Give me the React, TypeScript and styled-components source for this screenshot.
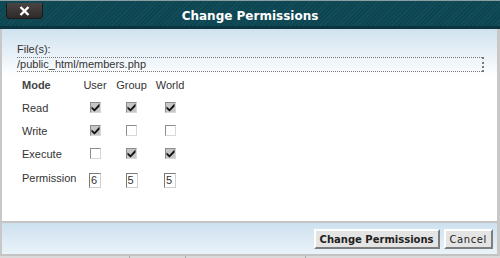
import styled, { createGlobalStyle } from "styled-components";

const GlobalStyle = createGlobalStyle`
  html, body {
    margin: 0;
    padding: 0;
    background: #d6d6d6;
  }
`;

const Dialog = styled.div`
  width: 500px;
  height: 258px;
  display: flex;
  flex-direction: column;
  overflow: hidden;
  font-family: "Liberation Sans", Arial, sans-serif;
  font-size: 11px;
  color: #333;
`;

const TitleBar = styled.div`
  position: relative;
  height: 25px;
  border-top: 1px solid #8a9ea3;
  border-bottom: 3px solid #0a3540;
  background-color: #0c4652;
  background-image: repeating-linear-gradient(
    135deg,
    rgba(255, 255, 255, 0.04) 0px,
    rgba(255, 255, 255, 0.04) 1px,
    transparent 1px,
    transparent 3px
  );
  display: flex;
  align-items: center;
  justify-content: center;
`;

const Title = styled.div`
  font-family: "DejaVu Sans", Verdana, sans-serif;
  font-weight: bold;
  font-size: 12px;
  color: #fff;
  margin-top: 5px;
`;

const CloseButton = styled.div`
  position: absolute;
  left: 6px;
  top: 2px;
  width: 35px;
  height: 15px;
  background: linear-gradient(#4a4544, #2e2a29);
  border: 1px solid #1d1b1a;
  border-top: none;
  border-radius: 0 0 4px 4px;
  display: flex;
  align-items: center;
  justify-content: center;
`;

const Body = styled.div`
  flex: 1;
  border-left: 2px solid #c8c8c8;
  border-right: 3px solid #c8c8c8;
  background: linear-gradient(#cfe2ef 0px, #ffffff 48px);
  padding: 13px 13px 0 15px;
`;

const FieldLabel = styled.div`
  line-height: 14px;
`;

const PathBox = styled.div`
  width: 465px;
  height: 13px;
  border-top: 1px dotted #777;
  border-bottom: 1px dotted #777;
  border-right: 2px dotted #777;
  line-height: 13px;
  margin-top: 1px;
`;

const Grid = styled.div`
  display: grid;
  grid-template-columns: 56px 34px 39px 38px;
  grid-template-rows: 23px 23px 23px 23px 26px;
  margin: 1px 0 0 5px;
  align-items: center;
`;

const Cell = styled.div<{ $head?: boolean; $center?: boolean }>`
  font-weight: ${(p) => (p.$head ? "bold" : "normal")};
  color: ${(p) => (p.$head ? "#444" : "#333")};
  display: flex;
  justify-content: ${(p) => (p.$center ? "center" : "flex-start")};
`;

const Box = styled.span<{ $on?: boolean }>`
  width: 11px;
  height: 11px;
  box-sizing: border-box;
  border: 1px solid;
  border-color: #8c8c8c #d8d8d8 #d8d8d8 #8c8c8c;
  background: ${(p) => (p.$on ? "#c6c6c6" : "#fff")};
  display: inline-flex;
  align-items: center;
  justify-content: center;
`;

const PermInput = styled.span`
  width: 12px;
  height: 15px;
  box-sizing: border-box;
  border: 1px solid;
  border-color: #7a7a7a #d0d0d0 #d0d0d0 #7a7a7a;
  background: #fff;
  font-size: 11px;
  line-height: 13px;
  padding-left: 1px;
  margin-top: 4px;
`;

const Footer = styled.div`
  height: 31px;
  border-top: 2px solid #c4c4c4;
  border-left: 2px solid #c8c8c8;
  border-right: 3px solid #c8c8c8;
  border-bottom: 2px solid #c4c4c4;
  background: linear-gradient(#cde1ef, #eaf3f9);
  display: flex;
  justify-content: flex-end;
  align-items: center;
  gap: 4px;
  padding-right: 4px;
`;

const Button = styled.button<{ $bold?: boolean }>`
  height: 20px;
  padding: 0 4px;
  margin-top: 1px;
  font-family: "DejaVu Sans", Verdana, sans-serif;
  font-size: 10px;
  font-weight: ${(p) => (p.$bold ? "bold" : "normal")};
  letter-spacing: ${(p) => (p.$bold ? "0" : "0.6px")};
  color: #222;
  background: #e4e4e4;
  border: 2px solid;
  border-color: #ffffff #7e7e7e #7e7e7e #ffffff;
`;

const Underlay = styled.div`
  height: 2px;
  background: #dadada;
  display: flex;
  overflow: hidden;
`;

const UnderCell = styled.div<{ $w: number; $first?: boolean }>`
  width: ${(p) => p.$w}px;
  border-left: ${(p) => (p.$first ? "none" : "1px solid #aaa")};
`;

function Check({ on }: { on: boolean }) {
  return (
    <Box $on={on}>
      {on && (
        <svg width="9" height="9" viewBox="0 0 9 9">
          <path d="M0.5 3.5 L3.5 6 L8.5 0.5 L8.5 3.5 L3.5 8.5 L0.5 5.8 Z" fill="#111" />
        </svg>
      )}
    </Box>
  );
}

const rows: { label: string; vals: boolean[] }[] = [
  { label: "Read", vals: [true, true, true] },
  { label: "Write", vals: [true, false, false] },
  { label: "Execute", vals: [false, true, true] },
];

export default function App() {
  return (
    <>
      <GlobalStyle />
      <Dialog>
        <TitleBar>
          <CloseButton>
            <svg width="11" height="10" viewBox="0 0 11 10">
              <path
                d="M1.5 1 L9.5 9 M9.5 1 L1.5 9"
                stroke="#fff"
                strokeWidth="2.4"
              />
            </svg>
          </CloseButton>
          <Title>Change Permissions</Title>
        </TitleBar>
        <Body>
          <FieldLabel>File(s):</FieldLabel>
          <PathBox>/public_html/members.php</PathBox>
          <Grid>
            <Cell $head>Mode</Cell>
            <Cell $center>User</Cell>
            <Cell $center>Group</Cell>
            <Cell $center>World</Cell>
            {rows.flatMap((r) => [
              <Cell key={r.label}>{r.label}</Cell>,
              ...r.vals.map((v, i) => (
                <Cell $center key={r.label + i}>
                  <Check on={v} />
                </Cell>
              )),
            ])}
            <Cell>Permission</Cell>
            <Cell $center>
              <PermInput>6</PermInput>
            </Cell>
            <Cell $center>
              <PermInput>5</PermInput>
            </Cell>
            <Cell $center>
              <PermInput>5</PermInput>
            </Cell>
          </Grid>
        </Body>
        <Footer>
          <Button $bold>Change Permissions</Button>
          <Button>Cancel</Button>
        </Footer>
        <Underlay>
          <UnderCell $w={130} $first />
          <UnderCell $w={55} />
          <UnderCell $w={120} />
          <UnderCell $w={195} />
        </Underlay>
      </Dialog>
    </>
  );
}
